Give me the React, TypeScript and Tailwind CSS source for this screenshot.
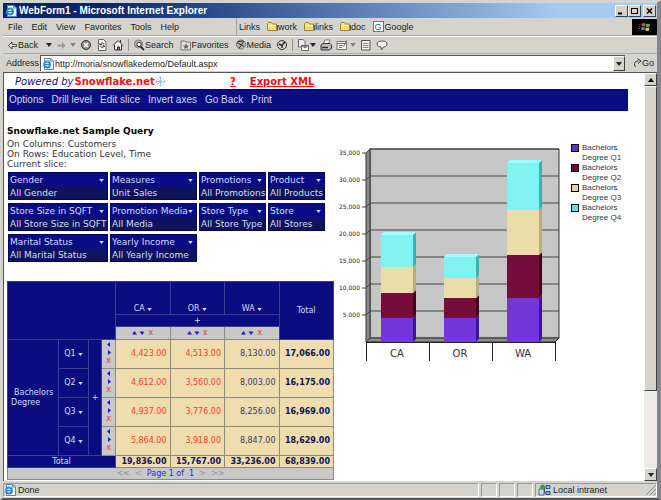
import type { ReactNode } from "react";

const MENU = ["File", "Edit", "View", "Favorites", "Tools", "Help"];
const LINKS = ["work", "links", "doc"];
const ACTIONS = ["Options", "Drill level", "Edit slice", "Invert axes", "Go Back", "Print"];

const SLICES = [
  { name: "Gender", value: "All Gender" },
  { name: "Measures", value: "Unit Sales" },
  { name: "Promotions", value: "All Promotions" },
  { name: "Product", value: "All Products" },
  { name: "Store Size in SQFT", value: "All Store Size in SQFT" },
  { name: "Promotion Media", value: "All Media" },
  { name: "Store Type", value: "All Store Type" },
  { name: "Store", value: "All Stores" },
  { name: "Marital Status", value: "All Marital Status" },
  { name: "Yearly Income", value: "All Yearly Income" },
];

const STATES = ["CA", "OR", "WA"];
const ROWS = [
  { name: "Q1", values: ["4,423.00", "4,513.00", "8,130.00"], total: "17,066.00" },
  { name: "Q2", values: ["4,612.00", "3,560.00", "8,003.00"], total: "16,175.00" },
  { name: "Q3", values: ["4,937.00", "3,776.00", "8,256.00"], total: "16,969.00" },
  { name: "Q4", values: ["5,864.00", "3,918.00", "8,847.00"], total: "18,629.00" },
];
const TOTALS = ["19,836.00", "15,767.00", "33,236.00", "68,839.00"];

const SERIES = [
  { name: "Q1", front: "#7336d9", side: "#4010a0", swatch: "bg-[#6230d8]" },
  { name: "Q2", front: "#760c3b", side: "#45001c", swatch: "bg-[#700838]" },
  { name: "Q3", front: "#ecdcaa", side: "#bcae78", swatch: "bg-[#e4d49c]" },
  { name: "Q4", front: "#80f2f2", side: "#3cb0b4", swatch: "bg-[#60dde0]" },
];
const BARS = [
  { name: "CA", x: 45, values: [4423, 4612, 4937, 5864] },
  { name: "OR", x: 108, values: [4513, 3560, 3776, 3918] },
  { name: "WA", x: 171, values: [8130, 8003, 8256, 8847] },
];

const FLOOR = 202;
const toY = (value: number) => Math.round(FLOOR - (value * 27) / 5000);

function Caret({ dim = false, small = false }: { dim?: boolean; small?: boolean }) {
  return (
    <svg width={small ? 5 : 6} height={small ? 3 : 4} viewBox="0 0 6 4" className={dim ? "shrink-0 text-[#85858a]" : "shrink-0"}>
      <path d="M0 0h6L3 4z" fill="currentColor" />
    </svg>
  );
}

function Icon({ children, size = 12 }: { children: ReactNode; size?: number }) {
  return (
    <svg width={size} height={size} viewBox="0 0 12 12" fill="none" stroke="#303038" className="shrink-0">
      {children}
    </svg>
  );
}

function Folder() {
  return (
    <svg width="11" height="9" viewBox="0 0 11 9" className="shrink-0">
      <path d="M.5 8V1.500L1.500.5H4.500L5.500 2H9.500V8.500H.5z" fill="#f4dd74" stroke="#a0822c" />
      <path d="M1.500 3.500H9" stroke="#fff6bd" />
      <path d="M10.500 3V8.500" stroke="#555" />
    </svg>
  );
}

function PageIcon() {
  return (
    <svg width="12" height="12" viewBox="0 0 12 12" className="shrink-0">
      <path d="M2.500.5H8.500L11.500 3V11.500H2.500z" fill="#fff" stroke="#5d86b8" />
      <path d="M8.500.5V3H11.500" fill="none" stroke="#5d86b8" />
      <circle cx="5" cy="6.500" r="3" fill="none" stroke="#1f7fd8" strokeWidth="1.800" />
      <path d="M2.500 6.500H8" stroke="#1f7fd8" strokeWidth="1.300" />
      <path d="M.6 9C2 5 5.500 3 9 2.800" fill="none" stroke="#58b4f0" strokeWidth=".8" />
    </svg>
  );
}

function WindowButton({ label, children }: { label: string; children: ReactNode }) {
  return (
    <button
      aria-label={label}
      className="flex h-3 w-[13px] items-center justify-center border border-t-white border-l-white border-r-[#404040] border-b-[#404040] bg-[#d5d3ce]"
    >
      <svg width="9" height="8" viewBox="0 0 9 8" fill="none" stroke="#000">
        {children}
      </svg>
    </button>
  );
}

function Divider() {
  return <span className="h-3 w-px bg-[#8f8f8c]" />;
}

function Toolbar() {
  return (
    <div className="flex h-[17px] items-center gap-1 border-t border-white pl-[5px]">
      <button className="mr-1 flex items-center gap-px">
        <svg width="9" height="7" viewBox="0 0 9 7" className="shrink-0">
          <path d="M4 0v2.500h4.500v2H4V7L.5 3.500z" fill="#e8e8e8" stroke="#222" strokeWidth=".8" />
        </svg>
        Back
      </button>
      <Caret />
      <button aria-label="Forward" className="ml-px">
        <svg width="9" height="7" viewBox="0 0 9 7">
          <path d="M5 0v2.500H.5v2H5V7l3.500-3.500z" fill="#9b9b9b" />
        </svg>
      </button>
      <Caret dim />
      <button aria-label="Stop">
        <Icon>
          <circle cx="6" cy="6" r="4.500" fill="#8f8f8f" />
          <path d="M4 4l4 4M8 4L4 8" stroke="#fff" strokeWidth="1.500" />
        </Icon>
      </button>
      <button aria-label="Refresh">
        <Icon>
          <path d="M2.500.5H7.500L10 3V11.500H2.500z" fill="#f5f5f5" stroke="#666" />
          <path d="M8 5.500C7.500 3.500 5 3.500 4.500 5.500M4.500 7C5 9 7.500 9 8 7M3.500 4.500l1 1.500 1.500-.5M9 8L8 6.500 6.500 7" />
        </Icon>
      </button>
      <button aria-label="Home">
        <Icon>
          <path d="M1 6.500L6 1.500l5 5M2.500 6v5h7V6M8.500 1v2.500" fill="#f1f1f1" />
          <path d="M5.500 11V8h2v3" fill="#777" />
        </Icon>
      </button>
      <Divider />
      <button className="flex items-center">
        <Icon>
          <circle cx="5.500" cy="5" r="4" fill="#bcbcbc" stroke="#777" />
          <circle cx="6" cy="5.500" r="2.200" fill="#fff" />
          <path d="M7.500 7.500L11 11" strokeWidth="1.800" />
        </Icon>
        Search
      </button>
      <button className="ml-[2px] flex items-center">
        <Icon>
          <path d="M1 4V2h4l1 1h4.500v8H1z" fill="#ddd" stroke="#777" />
          <path d="M6 4.500l1 2h2L7.500 8l.5 2L6 9 4 10l.5-2L3 6.500h2z" fill="#666" stroke="none" />
        </Icon>
        Favorites
      </button>
      <button className="ml-[2px] flex items-center">
        <Icon>
          <circle cx="6" cy="5.500" r="4.500" fill="#b5b5b5" stroke="#777" />
          <path d="M2 3.500l7 4M9 2L4 9.500M3 2.500l5-.5" />
        </Icon>
        Media
      </button>
      <button aria-label="History" className="ml-px">
        <Icon>
          <circle cx="6" cy="6" r="4.500" fill="#d2d2d2" />
          <path d="M3 5l3 1.500L9 2.500M6 6.500V9" strokeWidth="1.500" />
        </Icon>
      </button>
      <Divider />
      <button aria-label="Mail" className="flex items-center gap-px">
        <Icon>
          <path d="M1.500.5H6L8 2.500V8H1.500z" fill="#eee" stroke="#666" />
          <path d="M4.500 6.500h7v5h-7zM4.500 6.500L8 9l3.500-2.500" fill="#fff" stroke="#666" />
        </Icon>
        <Caret />
      </button>
      <button aria-label="Print">
        <Icon>
          <path d="M3.500 5L5 1h5L8.500 5" fill="#fff" stroke="#777" />
          <path d="M1 6l2-1.500h7L11.500 6v3.500L9 11H1z" fill="#bbb" />
          <path d="M2 8.500h6" strokeWidth="1.500" />
        </Icon>
      </button>
      <button aria-label="Edit" className="flex items-center gap-[2px]">
        <Icon>
          <path d="M1 2.500h9.500v8H1zM1 4.500h9.500M3 6.500h4M3 8.500h3M11 1L7.500 7.500" stroke="#777" fill="#eee" />
        </Icon>
        <Caret dim />
      </button>
      <button aria-label="Discuss">
        <Icon>
          <path d="M1.500 1.500h8.500v9.500H1.500z" fill="#f6f6f6" stroke="#555" />
          <path d="M3 4.500h5.500M3 6.500h5.500M3 8.500h5.500" stroke="#888" />
        </Icon>
      </button>
      <button aria-label="Messenger">
        <Icon>
          <path d="M6 2c3 0 5 1 5 3S9 8 7.500 8L5.500 11 5 8C3 8 1 7 1 5s2-3 5-3z" fill="#eee" stroke="#555" />
        </Icon>
      </button>
    </div>
  );
}

function BrowserChrome() {
  return (
    <header>
      <div className="flex h-[15px] items-center bg-linear-to-r from-[#0a246a] from-15% to-[#a6caf0] to-85% pr-px pl-[2px] text-white">
        <PageIcon />
        <h1 className="ml-[2px] flex-1 text-[10px] font-bold">WebForm1 - Microsoft Internet Explorer</h1>
        <WindowButton label="Minimize">
          <path d="M1 6.500h4" strokeWidth="2" />
        </WindowButton>
        <WindowButton label="Maximize">
          <path d="M1 1.500h7M1.500 1v6M7.500 1v6M1 6.500h7" />
        </WindowButton>
        <span className="w-[2px]" />
        <WindowButton label="Close">
          <path d="M2 1.500l5 5M7 1.500l-5 5" strokeWidth="1.500" />
        </WindowButton>
      </div>
      <div className="flex h-[18px] items-center border-b border-[#aaa3a0] pl-[5px]">
        <nav className="flex w-[228px] gap-[9px]">
          {MENU.map((item) => (
            <button key={item}>{item}</button>
          ))}
        </nav>
        <span className="h-full w-px bg-[#a8a2a0]" />
        <nav className="flex flex-1 items-center gap-[7px] pl-[2px]">
          <span>Links</span>
          {LINKS.map((link) => (
            <a key={link} href="#" className="flex items-center">
              <Folder />
              {link}
            </a>
          ))}
          <a href="#" className="flex items-center gap-px">
            <span className="flex h-[11px] w-[11px] items-center justify-center border border-t-[#3f7be0] border-r-[#d83a34] border-b-[#3aa45a] border-l-[#3f7be0] bg-white text-[#2a58c8]">
              G
            </span>
            Google
          </a>
        </nav>
        <span className="flex h-4 w-[25px] items-center justify-center bg-black">
          <svg width="12" height="10" viewBox="0 0 12 10">
            <path d="M3 1.500Q5 .5 6.500 1.500L6 4.500Q4.500 3.500 2.500 4.500z" fill="#e0582c" />
            <path d="M7.200 1.700Q9 2.500 11 1.500L10.500 4.500Q8.500 5.500 6.800 4.700z" fill="#5db04a" />
            <path d="M2.400 5.300Q4.500 4.500 6 5.300L5.500 8.300Q4 7.500 2 8.300z" fill="#4a80d8" />
            <path d="M6.700 5.500Q8.500 6.200 10.400 5.300L10 8.500Q8 9.300 6.200 8.500z" fill="#ecc740" />
            <path d="M.5 2.500h1M.3 4.500h1M0 6.500h1" stroke="#c04a3a" />
          </svg>
        </span>
      </div>
      <Toolbar />
      <div className="flex h-[19px] items-center border-t border-[#aaa] pl-[3px]">
        <label htmlFor="address">Address</label>
        <div className="ml-px flex h-4 flex-1 items-center border-t border-l border-[#555] bg-white pl-px">
          <PageIcon />
          <input
            id="address"
            defaultValue="http://moria/snowflakedemo/Default.aspx"
            className="ml-px min-w-0 flex-1 outline-none"
          />
          <button
            aria-label="Show addresses"
            className="flex h-[15px] w-3 items-center justify-center border border-t-white border-l-white border-r-[#404040] border-b-[#404040] bg-[#d5d3ce]"
          >
            <Caret />
          </button>
        </div>
        <button className="ml-2 flex w-6 items-center">
          <svg width="9" height="10" viewBox="0 0 9 10" fill="none" stroke="#333" className="shrink-0">
            <path d="M2.500 9C.5 6 1.500 3 5.500 3M4.500.8L8 3 5 5.500" />
          </svg>
          Go
        </button>
      </div>
    </header>
  );
}

function SliceGrid() {
  return (
    <div className="ml-px grid grid-cols-[100px_87px_67px_57px] gap-x-[2px] gap-y-[3px]">
      {SLICES.map((slice) => (
        <div key={slice.name} className="h-7 border border-[#04045a] bg-[#0a0c86] whitespace-nowrap text-[#d5dcf4]">
          <button className="flex h-[14px] w-full items-center justify-between pr-[3px] pl-px">
            {slice.name}
            <Caret small />
          </button>
          <p className="h-3 bg-[#0d145c] pl-px leading-3">{slice.value}</p>
        </div>
      ))}
    </div>
  );
}

function SortMarks() {
  return (
    <div className="flex items-center justify-center gap-1">
      <svg width="12" height="4" viewBox="0 0 12 4" fill="#1818e0">
        <path d="M0 3.500h5L2.500 0zM7.500.5h5L10 4z" />
      </svg>
      <span className="text-[#ec3838]">x</span>
    </div>
  );
}

function PivotTable() {
  return (
    <table className="w-full table-fixed border-collapse text-[8px] [&_td]:border [&_td]:border-[#8d8a84] [&_td]:p-0 [&_th]:border [&_th]:border-[#3c4088] [&_th]:p-0 [&_th]:font-normal">
      <colgroup>
        <col className="w-[51px]" />
        <col className="w-[30px]" />
        <col className="w-[13px]" />
        <col className="w-[14px]" />
        <col />
        <col />
        <col />
        <col />
      </colgroup>
      <thead className="bg-[#0a0c80] text-[#d5dcf4]">
        <tr className="h-[33px]">
          <th colSpan={4} rowSpan={3} aria-label="Axes" />
          {STATES.map((state) => (
            <th key={state} className="align-bottom">
              <button className="inline-flex items-center gap-[2px]">
                {state}
                <Caret small />
              </button>
            </th>
          ))}
          <th rowSpan={3}>Total</th>
        </tr>
        <tr className="h-3">
          <th colSpan={3}>+</th>
        </tr>
        <tr className="h-[13px] bg-[#c8c8c8]">
          {STATES.map((state) => (
            <td key={state}>
              <SortMarks />
            </td>
          ))}
        </tr>
      </thead>
      <tbody className="bg-[#efddad] text-right">
        {ROWS.map((row, i) => (
          <tr key={row.name} className="h-[29px]">
            {i === 0 && (
              <th rowSpan={4} className="bg-[#0a0c80] text-left text-[#d5dcf4]">
                <p className="pl-[3px] indent-[3px]">Bachelors Degree</p>
              </th>
            )}
            <th className="bg-[#0a0c80] text-center text-[#d5dcf4]">
              <button className="inline-flex items-center gap-[2px]">
                {row.name}
                <Caret small />
              </button>
            </th>
            {i === 0 && (
              <th rowSpan={4} className="bg-[#0a0c80] text-center text-[#d5dcf4]">
                +
              </th>
            )}
            <td className="bg-[#c8c8c8]">
              <div className="flex flex-col items-center">
                <svg width="4" height="14" viewBox="0 0 4 14" fill="#1818e0">
                  <path d="M3 0v5L0 2.500zM1 8v5l3-2.500z" />
                </svg>
                <span className="text-[#ec3838]">x</span>
              </div>
            </td>
            {row.values.map((value, j) => (
              <td key={STATES[j]} className={j < 2 ? "text-[#fc3c2c]" : "text-[#3a3a66]"}>
                <span className="pr-[3px]">{value}</span>
              </td>
            ))}
            <td className="font-bold text-[#10105c]">
              <span className="pr-[3px]">{row.total}</span>
            </td>
          </tr>
        ))}
        <tr className="h-3 font-bold text-[#10105c]">
          <th colSpan={4} className="bg-[#0a0c80] text-center text-[#d5dcf4]">
            Total
          </th>
          {TOTALS.map((total) => (
            <td key={total}>
              <span className="pr-[3px]">{total}</span>
            </td>
          ))}
        </tr>
        <tr className="h-3 bg-[#c8c8c8] text-center text-[#2424ec]">
          <td colSpan={8}>
            <span className="text-[#9a929c]">&lt;&lt; &nbsp;&lt;</span>&nbsp; Page 1 of &nbsp;1 &nbsp;
            <span className="text-[#9a929c]">&gt; &nbsp;&gt;&gt;</span>
          </td>
        </tr>
      </tbody>
    </table>
  );
}

function Bar({ x, values }: { x: number; values: number[] }) {
  const edges = values.reduce<number[]>((acc, v) => [...acc, acc[acc.length - 1] + v], [0]);
  const top = toY(edges[4]);
  return (
    <g>
      {SERIES.map((series, i) => {
        const low = toY(edges[i]);
        const high = toY(edges[i + 1]);
        return (
          <g key={series.name}>
            <path d={`M${x} ${high}H${x + 32}V${low}H${x}z`} fill={series.front} />
            <path d={`M${x + 32} ${high}l3 -3V${low - 3}l-3 3z`} fill={series.side} />
          </g>
        );
      })}
      <path d={`M${x} ${top}l3 -3h32l-3 3z`} fill="#a0ffff" />
    </g>
  );
}

function Chart() {
  const ticks = [0, 5000, 10000, 15000, 20000, 25000, 30000, 35000];
  return (
    <svg width="226" height="226" viewBox="0 0 226 226" role="img" aria-label="Customers by state" className="shrink-0">
      <path d="M34 9H223V198H34z" fill="#c6c6c6" stroke="#333" />
      <path d="M30 13L34 9V198L30 202z" fill="#8a8a8a" stroke="#333" />
      <path d="M30 202L34 198H223L219 202z" fill="#8a8a8a" stroke="#333" />
      {ticks.slice(1).map((tick) => (
        <g key={tick}>
          <path d={`M26 ${toY(tick)}h4l4 -4H223`} fill="none" stroke="#444" />
          <text x="24" y={toY(tick) + 2} textAnchor="end" fontSize="6" fill="#222">
            {tick.toLocaleString("en-US")}
          </text>
        </g>
      ))}
      {BARS.map((bar) => (
        <g key={bar.name}>
          <Bar x={bar.x} values={bar.values} />
          <text x={bar.x + 16} y="217" textAnchor="middle" fontSize="10" fill="#333">
            {bar.name}
          </text>
        </g>
      ))}
      <path d="M30 202.500H220M30.500 202V221M93.500 202V221M156.500 202V221M219.500 202V221" stroke="#222" fill="none" />
    </svg>
  );
}

function Legend() {
  return (
    <ul className="ml-[9px] pt-[3px] font-['Liberation_Sans',Arial,sans-serif] text-[8px] leading-[10px] text-[#333]">
      {SERIES.map((series) => (
        <li key={series.name} className="flex gap-[3px]">
          <span className={`mt-px h-2 w-2 shrink-0 border border-black ${series.swatch}`} />
          <span>
            Bachelors
            <br />
            Degree {series.name}
          </span>
        </li>
      ))}
    </ul>
  );
}

function Report() {
  return (
    <main className="min-w-0 flex-1 pl-[3px] font-['DejaVu_Sans',Verdana,sans-serif] leading-[10px] text-[#333]">
      <div className="flex h-4 items-center pt-px pl-2 text-[10px] font-bold text-[#f01010]">
        <p className="flex w-[215px] items-center">
          <span className="mr-px font-normal text-[#10108c] italic">Powered by</span>
          <span>Snowflake.net</span>
          <svg width="11" height="11" viewBox="0 0 11 11" fill="none" stroke="#8fc0e4">
            <path d="M5.500.5v10M.5 5.500h10M2 2l7 7M9 2L2 9M4 1l1.500 1.500L7 1M4 10l1.500-1.500L7 10M1 4l1.500 1.500L1 7M10 4L8.500 5.500 10 7" strokeWidth=".8" />
          </svg>
        </p>
        <a href="#" className="mr-[14px] underline">
          ?
        </a>
        <a href="#" className="underline">
          Export XML
        </a>
      </div>
      <nav className="mr-4 flex h-[22px] items-center gap-2 border border-[#04047a] bg-[#0a0c80] pl-px font-['Liberation_Sans',Arial,sans-serif] text-[10px] text-[#d0daf8]">
        {ACTIONS.map((action) => (
          <button key={action}>{action}</button>
        ))}
      </nav>
      <div className="flex items-start">
        <section className="w-[327px] shrink-0 pt-[14px]">
          <h2 className="mb-[2px] leading-3 font-bold text-black">Snowflake.net Sample Query</h2>
          <p>On Columns: Customers</p>
          <p>On Rows: Education Level, Time</p>
          <p className="mb-[3px]">Current slice:</p>
          <SliceGrid />
          <div className="mt-[19px]">
            <PivotTable />
          </div>
        </section>
        <section className="ml-[2px] flex items-start pt-[29px]">
          <Chart />
          <Legend />
        </section>
      </div>
    </main>
  );
}

function ScrollBar() {
  const arrow =
    "flex h-[13px] w-full items-center justify-center border border-t-white border-l-white border-r-[#404040] border-b-[#404040] bg-[#d5d3ce]";
  return (
    <div className="flex w-[13px] flex-col bg-[#eceae6]">
      <button aria-label="Scroll up" className={arrow}>
        <svg width="6" height="4" viewBox="0 0 6 4">
          <path d="M0 4h6L3 0z" />
        </svg>
      </button>
      <div className="flex-[305] border border-t-white border-l-white border-r-[#404040] border-b-[#404040] bg-[#d5d3ce]" />
      <div className="flex-[78]" />
      <button aria-label="Scroll down" className={arrow}>
        <Caret />
      </button>
    </div>
  );
}

function StatusBar() {
  const well = "h-[14px] border border-t-[#999] border-l-[#999] border-r-white border-b-white";
  return (
    <footer className="flex h-[17px] items-center gap-[2px]">
      <div className={`${well} flex flex-1 items-center gap-[2px]`}>
        <PageIcon />
        Done
      </div>
      <div className={`${well} w-4`} />
      <div className={`${well} w-4`} />
      <div className={`${well} w-4`} />
      <div className={`${well} flex w-[122px] items-center gap-[2px] pl-[2px]`}>
        <svg width="13" height="12" viewBox="0 0 13 12" className="shrink-0">
          <path d="M1 5h5v6H1z" fill="#c8dcec" stroke="#4a6a90" />
          <path d="M8 1.500h4v3H8zM8 7.500h4v3H8z" fill="#7fc0f0" stroke="#2a4a80" />
          <path d="M6.500 3h1M6.500 9h1M6.500 3v6" stroke="#2a4a80" />
          <circle cx="4.500" cy="3" r="2.500" fill="#3e9a48" />
        </svg>
        <span className="flex-1">Local intranet</span>
        <svg width="11" height="11" viewBox="0 0 11 11" stroke="#888">
          <path d="M1 11L11 1M5 11l6-6M9 11l2-2" />
        </svg>
      </div>
    </footer>
  );
}

export default function App() {
  return (
    <div className="flex min-h-screen flex-col border-t-[3px] border-r-4 border-b-2 border-l-[3px] border-t-[#d5d3ce] border-r-[#85858a] border-b-[#55555a] border-l-[#d5d3ce] bg-[#d5d3ce] font-['Liberation_Sans',Arial,sans-serif] text-[9px] leading-3 text-[#222]">
      <BrowserChrome />
      <div className="flex flex-1 border-t border-l border-[#555] bg-white">
        <Report />
        <ScrollBar />
      </div>
      <StatusBar />
    </div>
  );
}
